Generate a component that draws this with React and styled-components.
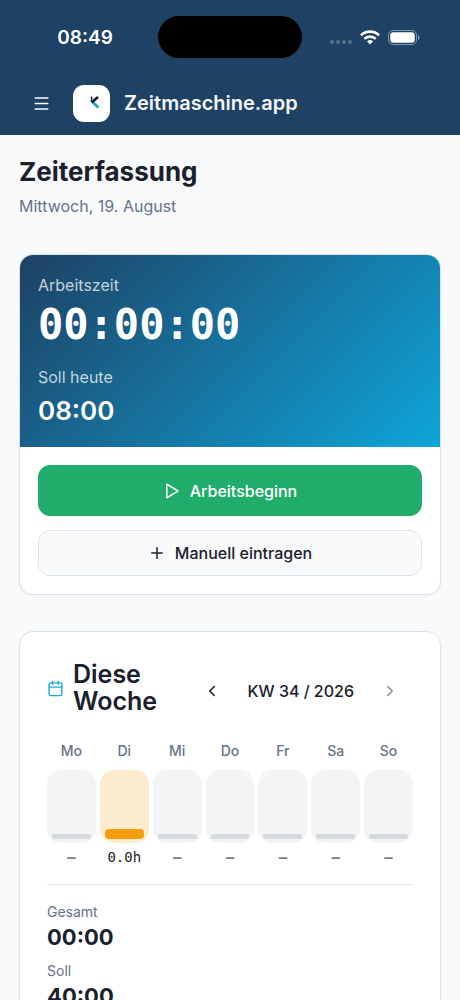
import React from "react";
import styled, { createGlobalStyle } from "styled-components";
import { Calendar, ChevronLeft, ChevronRight, Menu, Plus } from "lucide-react";

const GlobalStyle = createGlobalStyle`
  * {
    box-sizing: border-box;
  }

  body {
    margin: 0;
    background: #f9fafc;
    color: #1a202c;
    font-family: Inter, "Liberation Sans", sans-serif;
    font-size: 16px;
    line-height: 24px;
  }

  h1, h2, p, dl, dd {
    margin: 0;
  }

  button {
    font: inherit;
    cursor: pointer;
  }
`;

const Page = styled.div`
  min-height: 100vh;
`;

const TopBar = styled.header`
  height: 135px;
  background: #1e4164;
  color: #fff;
`;

const StatusBar = styled.div`
  display: grid;
  grid-template-columns: 1fr 144px 1fr;
  align-items: center;
  height: 74px;
`;

const Clock = styled.span`
  padding: 2px 8px 0 20px;
  font-size: 19px;
  font-weight: 600;
  text-align: center;
`;

const Island = styled.div`
  height: 42px;
  border-radius: 21px;
  background: #000;
`;

const StatusIcons = styled.div`
  display: flex;
  align-items: center;
  padding-left: 28px;
`;

const SignalSlot = styled.span`
  display: flex;
  padding-top: 10px;
`;

const IconSlot = styled.span`
  display: flex;
  margin-left: 8px;
`;

const AppBar = styled.div`
  display: flex;
  align-items: center;
  height: 58px;
  padding: 0 32px;
`;

const IconButton = styled.button`
  display: flex;
  padding: 0;
  border: 0;
  background: none;
  color: inherit;

  &:disabled {
    opacity: 0.5;
    cursor: default;
  }
`;

const Logo = styled.svg`
  width: 37px;
  height: 37px;
  margin: 0 14px 0 22px;
`;

const Brand = styled.span`
  font-size: 20px;
  font-weight: 600;
  color: #f3f5fa;
`;

const Content = styled.main`
  padding: 19px;
`;

const Title = styled.h1`
  font-size: 26px;
  font-weight: 700;
  line-height: 36px;
`;

const Today = styled.p`
  margin-top: 4px;
  color: #667389;
`;

const Card = styled.section`
  margin-top: 36px;
  overflow: hidden;
  border: 1px solid #dde2ea;
  border-radius: 14px;
  background: #fff;
  box-shadow: 0 1px 3px rgba(0, 0, 0, 0.06);
`;

const Hero = styled.div`
  padding: 18px 18px 16px;
  background: linear-gradient(135deg, #1e4164, #0ea5d9);
  color: #fff;
`;

const HeroLabel = styled.p`
  color: rgba(255, 255, 255, 0.75);
`;

const Timer = styled.p`
  margin-bottom: 12px;
  font-family: "DejaVu Sans Mono", monospace;
  font-size: 42px;
  font-weight: 700;
  line-height: 56px;
`;

const Target = styled.p`
  margin-top: 2px;
  font-size: 26px;
  font-weight: 600;
  line-height: 40px;
`;

const Actions = styled.div`
  display: flex;
  flex-direction: column;
  gap: 14px;
  padding: 18px;
`;

const ActionButton = styled.button`
  display: flex;
  align-items: center;
  justify-content: center;
  gap: 9px;
  height: ${({ $primary }) => ($primary ? "51px" : "46px")};
  border: 1px solid ${({ $primary }) => ($primary ? "#20ad6b" : "#dde2ea")};
  border-radius: 12px;
  background: ${({ $primary }) => ($primary ? "#20ad6b" : "#f9fafc")};
  color: ${({ $primary }) => ($primary ? "#fff" : "#1a202c")};
  font-weight: 500;
`;

const WeekBody = styled.div`
  padding: 29px 27px;
`;

const WeekHeader = styled.div`
  display: flex;
  align-items: center;
  justify-content: space-between;
  gap: 16px;
`;

const WeekTitle = styled.div`
  display: flex;
  align-items: center;
  gap: 9px;
  flex: 0 1 120px;

  svg {
    flex: none;
    color: #1ba9db;
  }

  h2 {
    font-size: 25px;
    font-weight: 600;
    line-height: 27px;
  }
`;

const WeekNav = styled.div`
  display: flex;
  align-items: center;
  gap: 27px;
  padding: 6px 14px 0 0;
  font-weight: 500;
  white-space: nowrap;
`;

const Days = styled.div`
  display: grid;
  grid-template-columns: repeat(7, 1fr);
  gap: 4px;
  margin-top: 26px;
`;

const Day = styled.div`
  display: flex;
  flex-direction: column;
  align-items: center;
  color: #667389;
  font-size: 14px;
  font-weight: 500;
  line-height: 20px;
`;

const Tube = styled.div`
  display: flex;
  align-items: flex-end;
  width: 100%;
  height: 73px;
  margin: 9px 0 4px;
  padding: 4px 5px;
  border-radius: 14px;
  background: ${({ $active }) => ($active ? "#fdebd0" : "#f3f4f6")};
`;

const Fill = styled.div`
  width: 100%;
  height: ${({ $active }) => ($active ? "10px" : "5px")};
  border-radius: ${({ $active }) => ($active ? "4px" : "2px")};
  background: ${({ $active }) => ($active ? "#f59e0b" : "#d5d8de")};
`;

const Hours = styled.span`
  font-family: "DejaVu Sans Mono", monospace;
  font-weight: ${({ $active }) => ($active ? 400 : 700)};
  color: ${({ $active }) => ($active ? "#1a202c" : "#7a7e87")};
`;

const Totals = styled.dl`
  display: grid;
  gap: 9px;
  margin-top: 17px;
  padding-top: 17px;
  border-top: 1px solid #dde2ea;

  dt {
    color: #667389;
    font-size: 14px;
    line-height: 20px;
  }

  dd {
    font-size: 22px;
    font-weight: 700;
    line-height: 30px;
  }
`;

const days = [
  { name: "Mo", hours: "–" },
  { name: "Di", hours: "0.0h", active: true },
  { name: "Mi", hours: "–" },
  { name: "Do", hours: "–" },
  { name: "Fr", hours: "–" },
  { name: "Sa", hours: "–" },
  { name: "So", hours: "–" },
];

const totals = [
  { label: "Gesamt", value: "00:00" },
  { label: "Soll", value: "40:00" },
];

const SignalDots = () => (
  <svg width="22" height="6" viewBox="0 0 22 6" fill="#fff" opacity="0.25">
    <circle cx="2" cy="3" r="2" />
    <circle cx="8" cy="3" r="2" />
    <circle cx="14" cy="3" r="2" />
    <circle cx="20" cy="3" r="2" />
  </svg>
);

const Wifi = () => (
  <svg width="20" height="15" viewBox="0 0 20 15" fill="none" stroke="#fff" strokeWidth="2.6">
    <path d="M1 5.3a12.8 12.8 0 0 1 18 0" />
    <path d="M4.3 8.9a8.2 8.2 0 0 1 11.4 0" />
    <path d="M10 14.5 7 11.4a4.4 4.4 0 0 1 6 0Z" fill="#fff" stroke="none" />
  </svg>
);

const Battery = () => (
  <svg width="32" height="15" viewBox="0 0 32 15">
    <rect x="0.5" y="0.5" width="28" height="14" rx="4.5" fill="none" stroke="#fff" opacity="0.45" />
    <rect x="2.2" y="2.2" width="24.6" height="10.6" rx="3.2" fill="#fff" />
    <path d="M30 5.2c2 .7 2 3.9 0 4.6z" fill="#fff" opacity="0.5" />
  </svg>
);

const PlayIcon = () => (
  <svg
    width="18"
    height="18"
    viewBox="0 0 18 18"
    fill="none"
    stroke="currentColor"
    strokeWidth="1.5"
    strokeLinejoin="round"
  >
    <path d="M3.8 2.2v13.6L15 9z" />
  </svg>
);

const App = () => {
  return (
    <Page>
      <GlobalStyle />
      <TopBar>
        <StatusBar>
          <Clock>08:49</Clock>
          <Island />
          <StatusIcons>
            <SignalSlot><SignalDots /></SignalSlot>
            <IconSlot><Wifi /></IconSlot>
            <IconSlot><Battery /></IconSlot>
          </StatusIcons>
        </StatusBar>
        <AppBar>
          <IconButton aria-label="Menü">
            <Menu size={19} strokeWidth={1.8} />
          </IconButton>
          <Logo viewBox="0 0 37 37" aria-hidden="true">
            <rect width="37" height="37" rx="11" fill="#fff" />
            <path d="m20.2 17.4 5 5" stroke="#19a7bd" strokeWidth="2.8" />
            <path d="M18.6 11.6v5.6" stroke="#1d3550" strokeWidth="1.6" />
            <path d="m25 12-6.4 5.6" stroke="#101d33" strokeWidth="2.6" />
          </Logo>
          <Brand>Zeitmaschine.app</Brand>
        </AppBar>
      </TopBar>
      <Content>
        <Title>Zeiterfassung</Title>
        <Today>Mittwoch, 19. August</Today>
        <Card>
          <Hero>
            <HeroLabel>Arbeitszeit</HeroLabel>
            <Timer>00:00:00</Timer>
            <HeroLabel>Soll heute</HeroLabel>
            <Target>08:00</Target>
          </Hero>
          <Actions>
            <ActionButton $primary>
              <PlayIcon />
              Arbeitsbeginn
            </ActionButton>
            <ActionButton>
              <Plus size={18} strokeWidth={2} />
              Manuell eintragen
            </ActionButton>
          </Actions>
        </Card>
        <Card>
          <WeekBody>
            <WeekHeader>
              <WeekTitle>
                <Calendar size={17} strokeWidth={2} />
                <h2>Diese Woche</h2>
              </WeekTitle>
              <WeekNav>
                <IconButton aria-label="Vorherige Woche">
                  <ChevronLeft size={18} />
                </IconButton>
                <span>KW 34 / 2026</span>
                <IconButton aria-label="Nächste Woche" disabled>
                  <ChevronRight size={18} />
                </IconButton>
              </WeekNav>
            </WeekHeader>
            <Days>
              {days.map(({ name, hours, active }) => (
                <Day key={name}>
                  <span>{name}</span>
                  <Tube $active={active}>
                    <Fill $active={active} />
                  </Tube>
                  <Hours $active={active}>{hours}</Hours>
                </Day>
              ))}
            </Days>
            <Totals>
              {totals.map(({ label, value }) => (
                <div key={label}>
                  <dt>{label}</dt>
                  <dd>{value}</dd>
                </div>
              ))}
            </Totals>
          </WeekBody>
        </Card>
      </Content>
    </Page>
  );
};

export default App;
